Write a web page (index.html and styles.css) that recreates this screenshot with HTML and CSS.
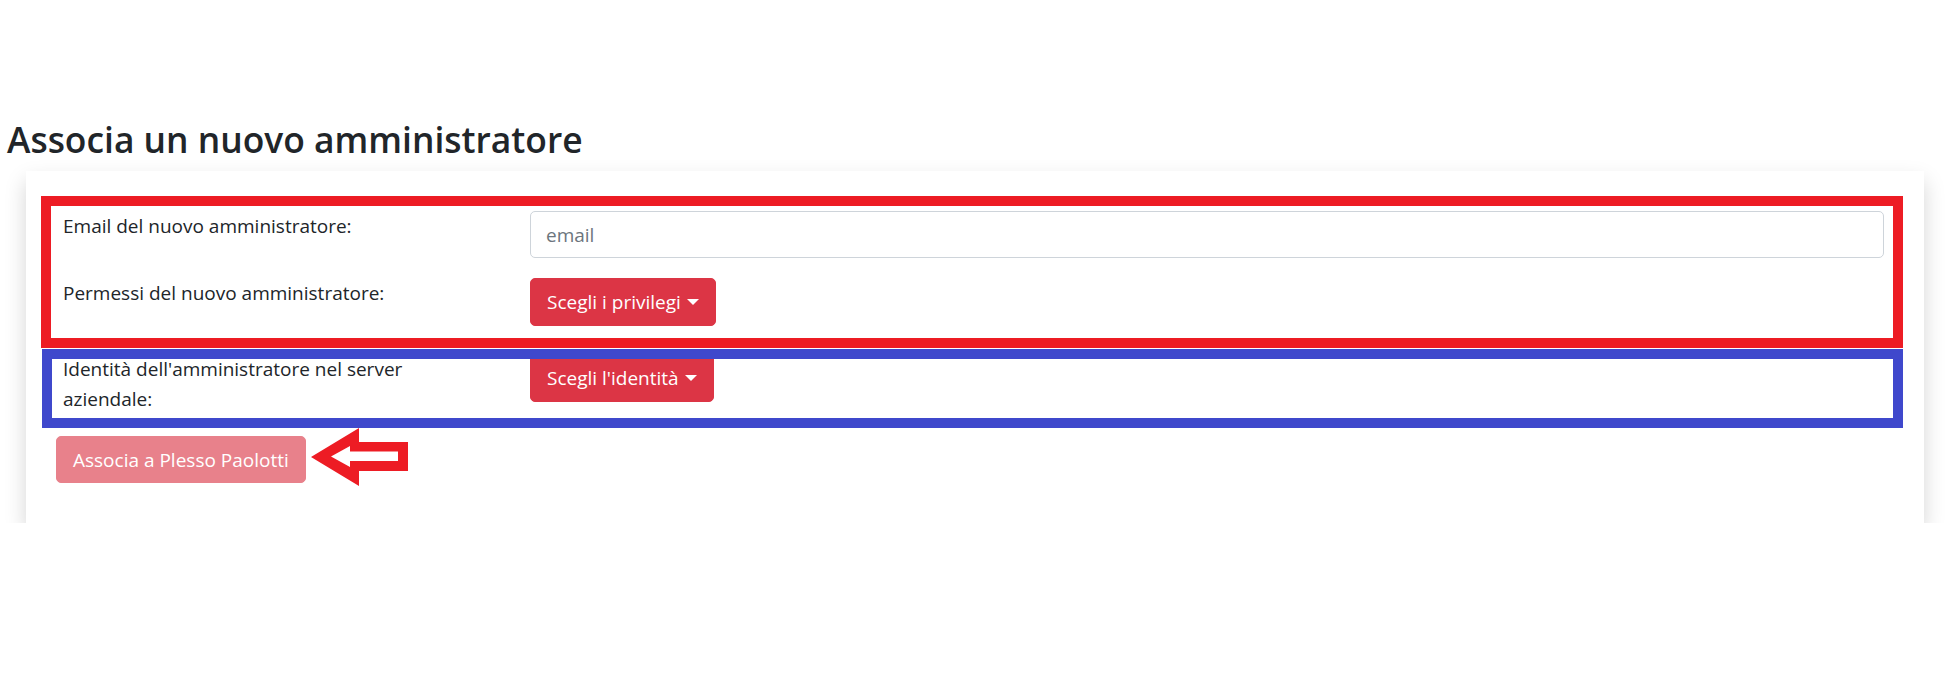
FILE: index.html
```html
<!DOCTYPE html>
<html lang="it">
<head>
<meta charset="utf-8">
<title>Associa un nuovo amministratore</title>
<link rel="stylesheet" href="styles.css">
</head>
<body>
<main class="page">
  <h2 class="title">Associa un nuovo amministratore</h2>
  <section class="card">
    <div class="form">
      <div class="row row-email">
        <label class="label" for="email">Email del nuovo amministratore:</label>
        <input class="input" id="email" type="email" placeholder="email">
      </div>
      <div class="row row-perm">
        <span class="label">Permessi del nuovo amministratore:</span>
        <div class="control"><button class="btn btn-danger dropdown" type="button">Scegli i privilegi</button></div>
      </div>
      <div class="row row-ident">
        <span class="label">Identità dell'amministratore nel server<br>aziendale:</span>
        <div class="control"><button class="btn btn-danger dropdown" type="button">Scegli l'identità</button></div>
      </div>
      <div class="actions">
        <button class="btn btn-submit" type="button">Associa a Plesso Paolotti</button>
      </div>
    </div>
    <div class="mark mark-red"></div>
    <div class="mark mark-blue"></div>
    <svg class="arrow" viewBox="0 0 98 58" width="98" height="58" aria-hidden="true">
      <polygon points="0,29 48,0 48,14 97,14 97,43 48,43 48,58" fill="#ED1C24"/>
      <polygon points="20,28.5 39,18 39,23.5 87,23.5 87,33 39,33 39,39" fill="#ffffff"/>
    </svg>
  </section>
</main>
</body>
</html>
```

FILE: styles.css
```css
* {
  box-sizing: border-box;
}

html, body {
  margin: 0;
  padding: 0;
  background: #ffffff;
}

body {
  font-family: "Open Sans", "Noto Sans", "Liberation Sans", sans-serif;
  font-size: 19px;
  line-height: 30px;
  color: #212529;
}

.page {
  padding: 117px 25px 0 0;
}

.title {
  margin: 0 0 10px 7px;
  font-size: 35.4px;
  line-height: 44px;
  font-weight: 600;
  color: #212529;
}

.card {
  position: relative;
  margin-left: 26px;
  background: #ffffff;
  box-shadow: 0 10px 20px rgba(0, 0, 0, 0.17);
  padding: 40px 40px 40px 37px;
}

.row {
  display: grid;
  grid-template-columns: 467px 1fr;
  align-items: start;
}

.row-email {
  margin-bottom: 20px;
}

.row-perm {
  margin-bottom: 28px;
}

.row-ident {
  margin-bottom: 22px;
}

.label {
  display: block;
  line-height: 30px;
}

.control {
  display: flex;
}

.input {
  display: block;
  width: 100%;
  height: 47px;
  padding: 0 15px;
  font-family: inherit;
  font-size: 19px;
  color: #495057;
  background: #ffffff;
  border: 1px solid #ced4da;
  border-radius: 5px;
  outline: none;
}

.input::placeholder {
  color: #6c757d;
  opacity: 1;
}

.btn {
  display: inline-flex;
  align-items: center;
  height: 48px;
  padding: 0 16px;
  font-family: inherit;
  font-size: 19px;
  line-height: 30px;
  color: #ffffff;
  border: 1px solid transparent;
  border-radius: 5px;
  cursor: pointer;
}

.btn-danger {
  background: #dc3545;
  border-color: #dc3545;
}

.dropdown::after {
  content: "";
  display: inline-block;
  margin-left: 6px;
  border-top: 6px solid #ffffff;
  border-left: 6px solid transparent;
  border-right: 6px solid transparent;
  border-bottom: 0;
}

.actions {
  display: flex;
  margin-left: -7px;
}

.btn-submit {
  height: 47px;
  padding: 0 16px;
  background: #e8818b;
  border-color: #e8818b;
}

.mark {
  position: absolute;
  border-style: solid;
  border-width: 10px;
  pointer-events: none;
}

.mark-red {
  left: 15px;
  top: 25px;
  width: 1862px;
  height: 152px;
  border-color: #ED1C24;
}

.mark-blue {
  left: 16px;
  top: 178px;
  width: 1861px;
  height: 79px;
  border-color: #3F48CC;
}

.arrow {
  position: absolute;
  left: 285px;
  top: 257px;
  display: block;
}
```
